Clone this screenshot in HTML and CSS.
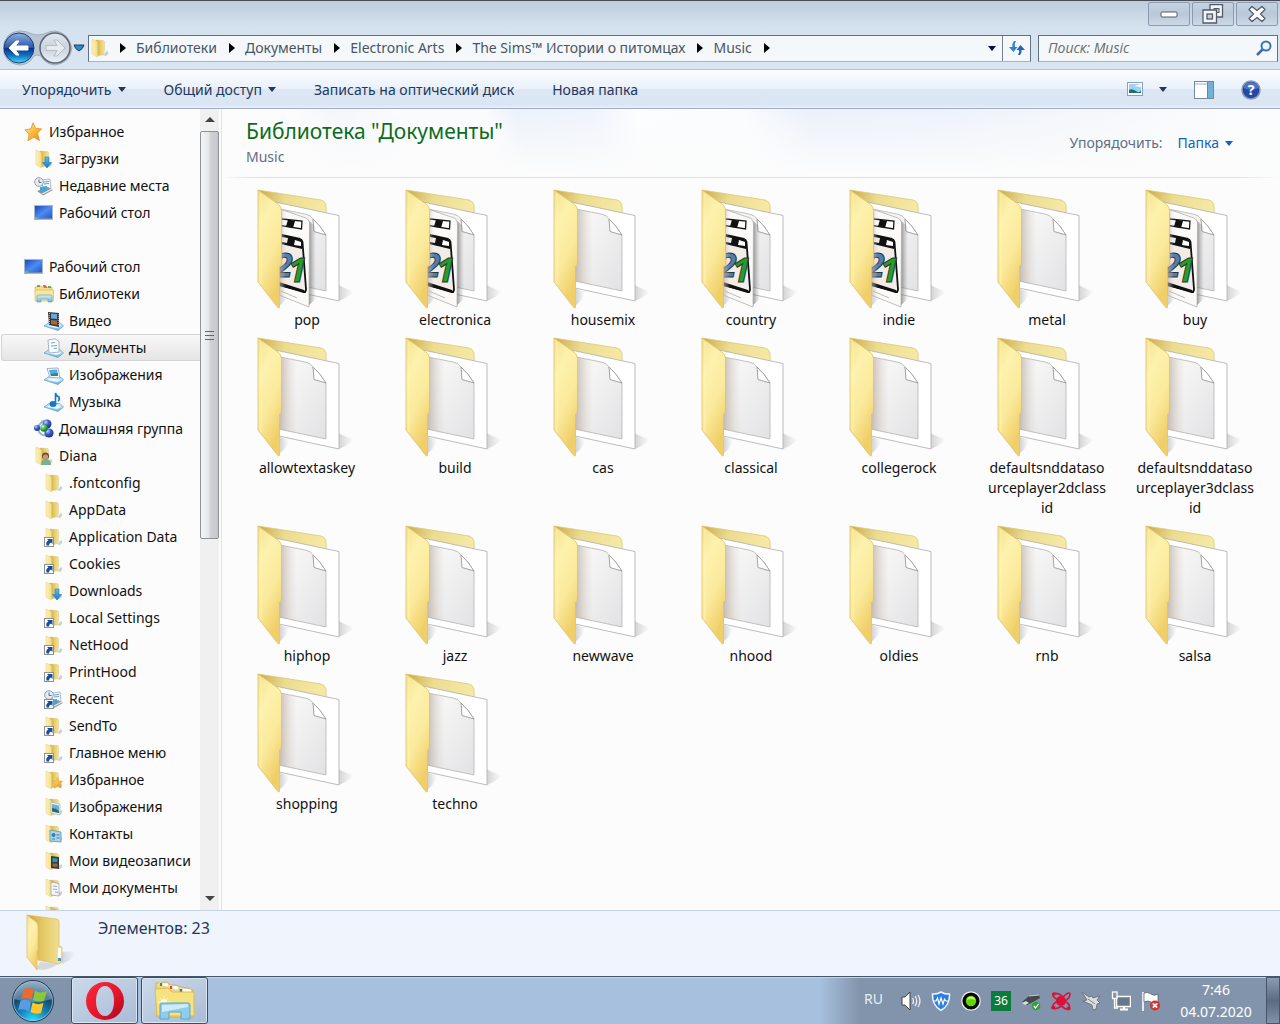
FILE: index.html
```html
<!DOCTYPE html>
<html lang="ru">
<head>
<meta charset="utf-8">
<meta name="viewport" content="width=device-width, initial-scale=1">
<title>Music</title>
<link rel="stylesheet" href="styles.css">
</head>
<body>
<svg class="defs" width="0" height="0" aria-hidden="true">
  <defs>
    <linearGradient id="flap" x1="0" y1="0" x2="0.4" y2="1"><stop offset="0" stop-color="#f3e08c"/><stop offset=".3" stop-color="#fdf2ad"/><stop offset=".65" stop-color="#fbea9c"/><stop offset="1" stop-color="#f0cf69"/></linearGradient>
    <linearGradient id="back" x1="0" y1="0" x2="1" y2="0.3"><stop offset="0" stop-color="#c9a94c"/><stop offset=".4" stop-color="#ecdc90"/><stop offset="1" stop-color="#f7eaa6"/></linearGradient>
    <linearGradient id="inner" x1="0" y1="0" x2="1" y2="1"><stop offset="0" stop-color="#fdfdfd"/><stop offset="1" stop-color="#e2e2e4"/></linearGradient>
    <linearGradient id="shade" x1="0" y1="0" x2="1" y2="0"><stop offset="0" stop-color="#b5a698" stop-opacity=".75"/><stop offset="1" stop-color="#d8ccc0" stop-opacity="0"/></linearGradient>
    <linearGradient id="cast" x1="0" y1="0" x2="1" y2="0"><stop offset="0" stop-color="#888" stop-opacity=".35"/><stop offset="1" stop-color="#999" stop-opacity="0"/></linearGradient>
    <linearGradient id="grey" x1="0" y1="0" x2="1" y2="0"><stop offset="0" stop-color="#333" stop-opacity=".5"/><stop offset="1" stop-color="#777" stop-opacity="0"/></linearGradient>
    <linearGradient id="screen" x1="0" y1="0" x2="1" y2="1"><stop offset="0" stop-color="#1546b8"/><stop offset=".5" stop-color="#4d8cf0"/><stop offset="1" stop-color="#1c52c4"/></linearGradient>
    <linearGradient id="starfill" x1="0" y1="0" x2="1" y2="1"><stop offset="0" stop-color="#fff0a0"/><stop offset=".5" stop-color="#fdbb3c"/><stop offset="1" stop-color="#e8801a"/></linearGradient>
    <linearGradient id="tray" x1="0" y1="0" x2="0" y2="1"><stop offset="0" stop-color="#d6effb"/><stop offset="1" stop-color="#6db4dc"/></linearGradient>
    <linearGradient id="backbtn" x1="0" y1="0" x2="0" y2="1"><stop offset="0" stop-color="#8fb0de"/><stop offset=".48" stop-color="#2b58ac"/><stop offset=".5" stop-color="#0b2e86"/><stop offset=".75" stop-color="#1272c4"/><stop offset="1" stop-color="#3ae0fb"/></linearGradient>
    <linearGradient id="fwdbtn" x1="0" y1="0" x2="0" y2="1"><stop offset="0" stop-color="#e2e8ef"/><stop offset=".5" stop-color="#cbd3dd"/><stop offset="1" stop-color="#eaf0f6"/></linearGradient>
    <linearGradient id="blue" x1="0" y1="0" x2="0" y2="1"><stop offset="0" stop-color="#56bff0"/><stop offset="1" stop-color="#1878c4"/></linearGradient>
    <linearGradient id="smallflap" x1="0" y1="0" x2="1" y2="0"><stop offset="0" stop-color="#fcf3ba"/><stop offset="1" stop-color="#f3dd86"/></linearGradient>
    <linearGradient id="smallback" x1="0" y1="0" x2="1" y2="0"><stop offset="0" stop-color="#c9a640"/><stop offset=".5" stop-color="#e6cb68"/><stop offset="1" stop-color="#f3e29a"/></linearGradient>
    <radialGradient id="orb" cx=".5" cy="1" r="1"><stop offset="0" stop-color="#2fe3ff"/><stop offset=".35" stop-color="#1687bd"/><stop offset=".65" stop-color="#14486f"/><stop offset="1" stop-color="#7597b4"/></radialGradient>
    <linearGradient id="opera" x1="0" y1="0" x2="1" y2="1"><stop offset="0" stop-color="#ff2a3a"/><stop offset=".6" stop-color="#e0142a"/><stop offset="1" stop-color="#a8061a"/></linearGradient>
    <radialGradient id="ball" cx=".35" cy=".3" r=".8"><stop offset="0" stop-color="#c8d8ff"/><stop offset=".4" stop-color="#4062c8"/><stop offset="1" stop-color="#142a80"/></radialGradient>
    <radialGradient id="gball" cx=".35" cy=".3" r=".8"><stop offset="0" stop-color="#d0f8c8"/><stop offset=".5" stop-color="#38a848"/><stop offset="1" stop-color="#106028"/></radialGradient>

    <symbol id="folder-base" viewBox="0 0 100 120">
      <path d="M82 112L82 96Q88 100 97 102Q92 108 82 112Z" fill="url(#cast)"/>
      <path d="M23 100L32 103Q29 112 23 116Z" fill="url(#cast)"/>
      <path d="M1 1L64 11Q68 12 69 16L70 60L24 60Z" fill="url(#back)" stroke="#dcc878" stroke-width=".8"/>
      <path d="M18 13L82 26.500V112L22 99Z" fill="#fff" stroke="#b4b4b4" stroke-width=".9"/>
      <path d="M18 19L48 25Q54 26 56 30Q63 36 69 46V102L22 92Z" fill="url(#inner)" stroke="#b4b4b4" stroke-width=".8"/>
      <path d="M56 30L57 42.500L69 46Q63 36 56 30Z" fill="#fff" stroke="#9a9a9a" stroke-width=".9"/>
      <path d="M23 20L40 24V97L22 92Z" fill="url(#shade)"/>
    </symbol>
    <symbol id="folder-flap" viewBox="0 0 100 120">
      <path d="M1 1L21 15Q24 17 24.500 21V74Q24.500 77 22.500 77V118.500Q22 120 20 117.500L1 93Z" fill="url(#flap)" stroke="#e0c268" stroke-width=".8"/>
      <path d="M4 5V95" stroke="#fff6c4" stroke-width="1" opacity=".7"/>
    </symbol>
    <symbol id="folder-page" viewBox="0 0 100 120">
      <use href="#folder-base"/><use href="#folder-flap"/>
    </symbol>
    <symbol id="folder-media" viewBox="0 0 100 120">
      <use href="#folder-base"/>
      <path d="M52 32L59 38V110L52 116Z" fill="url(#grey)"/>
      <path d="M20 19L49 29Q52 30 52.500 34L52 118L22 106Z" fill="#fbfaf9" stroke="#b0b0b0" stroke-width=".8"/>
      <path d="M20 29.500L45 32L44.500 40L20 36Z" fill="#fff" stroke="#161616" stroke-width="1.300"/>
      <path d="M31 30.500L38 32L36 39L29 37.500Z" fill="#111"/>
      <path d="M20 45L43 50Q45 50.500 45.500 53L49 100Q49 104 46 103L20 95" fill="#f1ece6" stroke="#111" stroke-width="1.800"/>
      <path d="M20 45L45 50.500V60L20 54Z" fill="#111"/>
      <path d="M25 48L31 49L30 54L25 53Z" fill="#eee"/>
      <path d="M38 51L44 53V57L37 56Z" fill="#fff"/>
      <path d="M22 93L47 101L49 104L22 97Z" fill="#111"/>
      <path d="M24 102L40 109" stroke="#aaa" stroke-width=".8"/>
      <text x="17" y="88" class="digit digit-two">2</text>
      <text x="31" y="93" class="digit digit-one">1</text>
      <path d="M23 20L29 22V108L22 106Z" fill="url(#shade)"/>
      <use href="#folder-flap"/>
    </symbol>

    <symbol id="i-folder" viewBox="0 0 20 20">
      <path d="M13 17L17 13Q20 15 16 18Z" fill="#999" opacity=".45"/>
      <path d="M6 2L13.500 2.500Q14.500 3 14.500 4V16.500L7 18Z" fill="url(#smallback)" stroke="#d8bf6c" stroke-width=".4"/>
      <path d="M14 13H15V16.500H14Z" fill="#d5eef0"/>
      <path d="M2 1L6.500 3Q7.500 3.500 7.500 5V19L2 16Z" fill="url(#smallflap)" stroke="#e2cc80" stroke-width=".5"/>
    </symbol>
    <symbol id="i-download" viewBox="0 0 20 20"><use href="#i-folder"/><path d="M11 8h4v5.500h2.500L13 19 8.500 13.500h2.500Z" fill="url(#blue)" stroke="#1c7cc0" stroke-width=".6"/></symbol>
    <symbol id="arrow-link" viewBox="0 0 20 20"><rect x=".5" y="10.500" width="9" height="9" fill="#fff" stroke="#8a8f98"/><path d="M2.500 18.500Q1.500 14.500 4.500 13.500L3 12H8.500V17L7 15.500Q5 16 5 18.500Z" fill="#1c4c98"/></symbol>
    <symbol id="i-link" viewBox="0 0 20 20"><use href="#i-folder"/><use href="#arrow-link"/></symbol>
    <symbol id="i-star" viewBox="0 0 20 20"><path d="M9 .8L11.800 6.500 17.600 6.800 13.500 11.300 15.500 18.500 9.800 15.200 4 18.800 5 12 .8 7.800 6.800 6.800Z" fill="url(#starfill)" stroke="#e0952c" stroke-width=".8"/></symbol>
    <symbol id="i-recent" viewBox="0 0 20 20">
      <path d="M8 4L16 3 17 13 9 15Z" fill="#f3f7fa" stroke="#8da0ac" stroke-width=".7"/><path d="M10 6l5-.6M10 8l5-.6" stroke="#67a6c8"/>
      <path d="M3 15L14 11 19 14 9 19.500Z" fill="#8c979e"/><path d="M6 11L13 10V15L6 16Z" fill="#4aa4cc"/><path d="M8 18L18 13" stroke="#e4eaed" stroke-width="1.200"/>
      <circle cx="5" cy="6" r="4.300" fill="#e4edf2" stroke="#8fa4b2"/><path d="M5 3.500V6.500H7.500" stroke="#456" fill="none" stroke-width=".8"/>
    </symbol>
    <symbol id="i-recent-link" viewBox="0 0 20 20"><use href="#i-recent"/><use href="#arrow-link"/></symbol>
    <symbol id="i-desktop" viewBox="0 0 20 20"><rect x=".5" y="2.500" width="18" height="14" fill="url(#screen)" stroke="#a9b8cc"/><path d="M1 15.500H18" stroke="#6c87b0"/><circle cx="2.500" cy="15.500" r="1.400" fill="#59c0b0"/></symbol>
    <symbol id="i-libs" viewBox="0 0 20 20">
      <path d="M1 3L7 2 9 3.500H18V14H2Z" fill="#f5e08a" stroke="#d0b252" stroke-width=".7"/><path d="M3 2h3M9 2h3M14 3h3" stroke="#4a9a4a" stroke-width="1.500"/><path d="M10 3h3" stroke="#d85030" stroke-width="1.300"/>
      <path d="M1 6H19.500V17H1Z" fill="#f8e89c" stroke="#d8bc60" stroke-width=".7"/>
      <path d="M3 18V12Q3 11 5 11H16Q18 11 18 12V18L14 18V15H7V18Z" fill="url(#tray)" stroke="#5fa4c8" stroke-width=".7"/>
    </symbol>
    <symbol id="tray-base" viewBox="0 0 20 20"><path d="M0 15L5 11.500H16L19.500 15 14 19.500Z" fill="url(#tray)" stroke="#5b9cc4" stroke-width=".7"/><path d="M3 15L6 13H15L17 15 13 17Z" fill="#e7f7fd"/></symbol>
    <symbol id="i-video" viewBox="0 0 20 20"><use href="#tray-base"/><path d="M4 1L15 2V16L5 14Z" fill="#30363e"/><path d="M7 2.500L13 3V8L7 7.500Z" fill="#6aa6d8"/><path d="M7 9L13 9.500V14L7 13Z" fill="#a5683e"/><path d="M5.500 2V14M14.200 3V15" stroke="#ccd" stroke-width=".8" stroke-dasharray="1 1"/></symbol>
    <symbol id="i-docs" viewBox="0 0 20 20"><use href="#tray-base"/><path d="M4 2L11 .8 15 3.500V14L5 15Z" fill="#fbfdff" stroke="#8fa6bc" stroke-width=".8"/><path d="M7 5l4-.5M7 8l6-.5M10 10.500l3-.3" stroke="#7aa0d0" stroke-width="1.200"/></symbol>
    <symbol id="i-pics" viewBox="0 0 20 20"><use href="#tray-base"/><path d="M3 3.500L14 3 16 13 6 12.500Z" fill="#f5fbff" stroke="#7fa4c0" stroke-width=".8"/><path d="M5 5L13 4.500 14 11 7 11Z" fill="#58a8d8"/><path d="M6.500 9L13.500 8 14 11H7Z" fill="#3c7c8c"/></symbol>
    <symbol id="i-music" viewBox="0 0 20 20"><use href="#tray-base"/><ellipse cx="9" cy="12" rx="3.500" ry="3" fill="#1876c4"/><path d="M11.500 12V1Q12 4 15 5Q16 8 14 9" fill="none" stroke="#1b78c6" stroke-width="1.600"/></symbol>
    <symbol id="i-home" viewBox="0 0 20 20"><path d="M4 8Q10 -3 16 6M4 10Q6 18 14 16" fill="none" stroke="#8fb0d8" stroke-width="2"/><circle cx="3" cy="9" r="3" fill="url(#ball)"/><circle cx="13" cy="5" r="4.500" fill="url(#ball)"/><circle cx="15" cy="14" r="4.600" fill="url(#ball)"/><circle cx="10" cy="9" r="3.800" fill="url(#gball)"/></symbol>
    <symbol id="i-user" viewBox="0 0 20 20"><use href="#i-folder"/><path d="M7 19Q7 13 12 13T17 19Z" fill="#7ab090"/><circle cx="11.500" cy="10" r="3.600" fill="#705038"/><circle cx="11.500" cy="11" r="2.600" fill="#c89a74"/></symbol>
    <symbol id="i-fav" viewBox="0 0 20 20"><use href="#i-folder"/><use href="#i-star" x="8" y="7" width="12" height="12"/></symbol>
    <symbol id="i-fpics" viewBox="0 0 20 20"><use href="#i-folder"/><path d="M7 5L16 7V18L7 16Z" fill="#e9f4fa" stroke="#a0b4c0" stroke-width=".7"/><path d="M8 7L15 8.500V16L8 14.500Z" fill="#6cb0e0"/><path d="M8 11Q12 11 15 14V16L8 14.500Z" fill="#2c6a60"/></symbol>
    <symbol id="i-contacts" viewBox="0 0 20 20"><use href="#i-folder"/><path d="M6 6L17 8V18L6 17Z" fill="#a8d6ee" stroke="#5c93b4" stroke-width=".8"/><circle cx="9.500" cy="11" r="2" fill="#3d7ea8"/><path d="M12.500 11h3M12.500 14h3M8 15h3" stroke="#3d7ea8"/></symbol>
    <symbol id="i-fvideo" viewBox="0 0 20 20"><use href="#i-folder"/><path d="M7 5L15 6V18L7 17Z" fill="#2f3c44"/><path d="M8.500 7L13.500 7.500V11L8.500 11Z" fill="#3c92ac"/><path d="M8.500 12.500H13.500V16L8.500 15.500Z" fill="#98683c"/></symbol>
    <symbol id="i-fdocs" viewBox="0 0 20 20"><use href="#i-folder"/><path d="M7 4L15 5.500V18L7 17Z" fill="#f4f6fa" stroke="#9a9aa8" stroke-width=".7"/><path d="M9 8l4 .5M9 11l4 .5M11 14l3 .5" stroke="#a0aac8"/></symbol>

    <symbol id="i-explorer" viewBox="0 0 42 40">
      <path d="M2 6L2 2 13 1 16 4 22 4 27 6 34 7 39 9V36H3Z" fill="#eed888" stroke="#c8a94c" stroke-width=".8"/><path d="M5 3l9 1M15 6l9 1M26 9l11 1" stroke="#fff" stroke-width="3"/><path d="M7 2v3" stroke="#3c9a3c" stroke-width="2.500"/><path d="M17 5v3" stroke="#d85030" stroke-width="2.500"/><path d="M27 8v3" stroke="#3870b8" stroke-width="2.500"/>
      <path d="M1 8L14 7 18 11H40V35H3Z" fill="#f6e27e" stroke="#dabd58"/>
      <path d="M10 15V27M4 21H17M6 17L14 25M14 17L6 25" stroke="#fff" stroke-width=".6"/><circle cx="10" cy="21" r="3" fill="#fffde0"/>
      <path d="M6 38V24Q6 22 8 22H34Q36 22 36 24V38H27V31H15V38Z" fill="#8fcdec" stroke="#5aa4cc"/><path d="M8 24L34 23V26L8 31Z" fill="#def3fc" opacity=".8"/>
    </symbol>
  </defs>
</svg>

<main class="window">
  <header class="titlebar">
    <button class="win-btn" aria-label="Свернуть"><svg width="20" height="20" viewBox="0 0 20 20"><rect x="2" y="8" width="16" height="5" rx="1" fill="#fff" stroke="#535b68"/></svg></button>
    <button class="win-btn" aria-label="Восстановить"><svg width="22" height="20" viewBox="0 0 22 20"><path d="M8 .5H20.500V13H8Z" fill="#f4f6f8" stroke="#535b68" stroke-width="1.300"/><rect x="12" y="4.500" width="5" height="4" fill="#c5d1de" stroke="#535b68"/><path d="M1 6H14.500V19H1Z" fill="#f4f6f8" stroke="#535b68" stroke-width="1.300"/><rect x="5" y="10" width="5.500" height="5" fill="#c5d1de" stroke="#535b68" stroke-width="1.300"/></svg></button>
    <button class="win-btn" aria-label="Закрыть"><svg width="20" height="18" viewBox="0 0 20 18"><path d="M2 4.500L5 1.500 10 5.500 15 1.500 18 4.500 13.500 9 18 13.500 15 16.500 10 12.500 5 16.500 2 13.500 6.500 9Z" fill="#fff" stroke="#535b68" stroke-width="1.300" stroke-linejoin="round"/></svg></button>
  </header>

  <nav class="navrow">
    <div class="history">
      <svg class="history-band" width="70" height="36" viewBox="0 0 70 36" aria-hidden="true"><path d="M16 1Q24 1 29 4Q35 6 41 4Q47 1 52 1Q65 2 69 18Q67 33 52 35Q42 34 38 26Q34 24 31 26Q26 35 16 35Q1 33 0 18Q2 2 16 1Z" fill="#b9c5d3" stroke="#a3afbd"/></svg>
      <button class="hist-btn" aria-label="Назад"><svg width="32" height="32" viewBox="0 0 32 32"><circle cx="16" cy="16" r="15" fill="url(#backbtn)" stroke="#223c70"/><path d="M6 16L13 9H16L12.500 14H25V18H12.500L16 23H13Z" fill="#fff" stroke="#fff" stroke-linejoin="round"/></svg></button>
      <button class="hist-btn" aria-label="Вперед"><svg width="32" height="32" viewBox="0 0 32 32"><circle cx="16" cy="16" r="15" fill="url(#fwdbtn)" stroke="#5e6772" stroke-width="1.500"/><path d="M26 16L18 8H15L18 13.500H7V18.500H18L15 24H18Z" fill="#e6ebf0" stroke="#b3bbc5" stroke-linejoin="round"/></svg></button>
      <button class="recent-btn" aria-label="Последние страницы"><svg width="12" height="8" viewBox="0 0 12 8"><path d="M1 1H11Q10 5 6 7Q2 5 1 1Z" fill="#3a86bc" stroke="#1c3c68"/></svg></button>
    </div>
    <div class="address">
      <svg class="icon" width="20" height="20"><use href="#i-folder"/></svg>
      <ol class="crumbs">
        <li><a href="#lib">Библиотеки</a></li>
        <li><a href="#docs">Документы</a></li>
        <li><a href="#ea">Electronic Arts</a></li>
        <li><a href="#sims">The Sims™ Истории о питомцах</a></li>
        <li><a href="#music">Music</a></li>
      </ol>
      <button class="addr-drop" aria-label="Предыдущие расположения"><span class="caret"></span></button>
      <button class="addr-refresh" aria-label="Обновить"><svg width="18" height="16" viewBox="0 0 18 16"><path d="M6 1Q4 3 4.500 7H1L5.500 12 9.500 7H7Q6 4 8 1Z" fill="#2e86c8"/><path d="M12 15Q14 13 13.500 10H17L12.500 5 8.500 10H11Q12 12 10 15Z" fill="#2265b4"/></svg></button>
    </div>
    <label class="search">
      <input type="search" placeholder="Поиск: Music" aria-label="Поиск">
      <svg width="18" height="16" viewBox="0 0 18 16" aria-hidden="true"><circle cx="11" cy="6" r="4.500" fill="#eef6fc" stroke="#3c74b8" stroke-width="2"/><path d="M7.500 9.500L2 15" stroke="#3a6cab" stroke-width="2.500"/></svg>
    </label>
  </nav>

  <div class="toolbar">
    <button class="tool">Упорядочить<span class="caret"></span></button>
    <button class="tool">Общий доступ<span class="caret"></span></button>
    <button class="tool">Записать на оптический диск</button>
    <button class="tool">Новая папка</button>
    <div class="tool-right">
      <button class="view-btn" aria-label="Изменить представление"><svg width="16" height="15" viewBox="0 0 16 15"><rect x=".5" y=".5" width="15" height="13" fill="#fff" stroke="#8aa0b8"/><rect x="2" y="2" width="12" height="9" fill="#9ed4ee"/><path d="M2 8Q5 6 9 9T14 8V11H2Z" fill="#1f6c80"/><path d="M7 4L14 2V5Z" fill="#fff"/></svg><span class="caret"></span></button>
      <button aria-label="Область просмотра"><svg width="20" height="18" viewBox="0 0 20 18"><rect x=".5" y=".5" width="19" height="17" fill="#fff" stroke="#7689a0"/><path d="M1 3H13" stroke="#9fb2c6"/><rect x="14" y="1" width="5" height="16" fill="#6fb2d4"/><path d="M13.500 1V17" stroke="#5a8fb0"/></svg></button>
      <button aria-label="Справка"><svg width="20" height="20" viewBox="0 0 20 20"><circle cx="10" cy="10" r="9" fill="#2448a8" stroke="#8a97b0" stroke-width="1.500"/><path d="M2.500 8Q4 2 10 2T17.500 8Q10 11 2.500 8Z" fill="#5f85d8" opacity=".7"/><text x="10" y="15" text-anchor="middle" class="help-mark">?</text></svg></button>
    </div>
  </div>

  <div class="body">
    <aside class="sidebar">
      <ul class="tree">
        <li><a class="l1" href="#t"><svg><use href="#i-star"/></svg>Избранное</a></li>
        <li><a class="l2" href="#t"><svg><use href="#i-download"/></svg>Загрузки</a></li>
        <li><a class="l2" href="#t"><svg><use href="#i-recent"/></svg>Недавние места</a></li>
        <li><a class="l2" href="#t"><svg><use href="#i-desktop"/></svg>Рабочий стол</a></li>
        <li class="group"><a class="l1" href="#t"><svg><use href="#i-desktop"/></svg>Рабочий стол</a></li>
        <li><a class="l2" href="#t"><svg><use href="#i-libs"/></svg>Библиотеки</a></li>
        <li><a class="l3" href="#t"><svg><use href="#i-video"/></svg>Видео</a></li>
        <li><a class="l3 selected" href="#t" aria-current="true"><svg><use href="#i-docs"/></svg>Документы</a></li>
        <li><a class="l3" href="#t"><svg><use href="#i-pics"/></svg>Изображения</a></li>
        <li><a class="l3" href="#t"><svg><use href="#i-music"/></svg>Музыка</a></li>
        <li><a class="l2" href="#t"><svg><use href="#i-home"/></svg>Домашняя группа</a></li>
        <li><a class="l2" href="#t"><svg><use href="#i-user"/></svg>Diana</a></li>
        <li><a class="l3" href="#t"><svg><use href="#i-folder"/></svg>.fontconfig</a></li>
        <li><a class="l3" href="#t"><svg><use href="#i-folder"/></svg>AppData</a></li>
        <li><a class="l3" href="#t"><svg><use href="#i-link"/></svg>Application Data</a></li>
        <li><a class="l3" href="#t"><svg><use href="#i-link"/></svg>Cookies</a></li>
        <li><a class="l3" href="#t"><svg><use href="#i-download"/></svg>Downloads</a></li>
        <li><a class="l3" href="#t"><svg><use href="#i-link"/></svg>Local Settings</a></li>
        <li><a class="l3" href="#t"><svg><use href="#i-link"/></svg>NetHood</a></li>
        <li><a class="l3" href="#t"><svg><use href="#i-link"/></svg>PrintHood</a></li>
        <li><a class="l3" href="#t"><svg><use href="#i-recent-link"/></svg>Recent</a></li>
        <li><a class="l3" href="#t"><svg><use href="#i-link"/></svg>SendTo</a></li>
        <li><a class="l3" href="#t"><svg><use href="#i-link"/></svg>Главное меню</a></li>
        <li><a class="l3" href="#t"><svg><use href="#i-fav"/></svg>Избранное</a></li>
        <li><a class="l3" href="#t"><svg><use href="#i-fpics"/></svg>Изображения</a></li>
        <li><a class="l3" href="#t"><svg><use href="#i-contacts"/></svg>Контакты</a></li>
        <li><a class="l3" href="#t"><svg><use href="#i-fvideo"/></svg>Мои видеозаписи</a></li>
        <li><a class="l3" href="#t"><svg><use href="#i-fdocs"/></svg>Мои документы</a></li>
        <li><a class="l3" href="#t"><svg><use href="#i-fdocs"/></svg>Моя музыка</a></li>
      </ul>
      <div class="scrollbar" aria-hidden="true">
        <span class="scroll-arrow"><svg width="10" height="6" viewBox="0 0 10 6"><path d="M5 0L10 5H0Z" fill="#444"/></svg></span>
        <span class="thumb"><svg width="9" height="10" viewBox="0 0 9 10"><path d="M0 1.500H9M0 5.500H9M0 9.500H9" stroke="#666"/></svg></span>
        <span class="track"></span>
        <span class="scroll-arrow"><svg width="10" height="6" viewBox="0 0 10 6"><path d="M0 0H10L5 5Z" fill="#444"/></svg></span>
      </div>
    </aside>

    <section class="content">
      <div class="lib-head">
        <div>
          <h1>Библиотека "Документы"</h1>
          <p>Music</p>
        </div>
        <div class="arrange"><span>Упорядочить:</span><button>Папка<span class="caret"></span></button></div>
      </div>
      <ul class="files">
        <li><a href="#f"><svg><use href="#folder-media"/></svg><span>pop</span></a></li>
        <li><a href="#f"><svg><use href="#folder-media"/></svg><span>electronica</span></a></li>
        <li><a href="#f"><svg><use href="#folder-page"/></svg><span>housemix</span></a></li>
        <li><a href="#f"><svg><use href="#folder-media"/></svg><span>country</span></a></li>
        <li><a href="#f"><svg><use href="#folder-media"/></svg><span>indie</span></a></li>
        <li><a href="#f"><svg><use href="#folder-page"/></svg><span>metal</span></a></li>
        <li><a href="#f"><svg><use href="#folder-media"/></svg><span>buy</span></a></li>
        <li><a href="#f"><svg><use href="#folder-page"/></svg><span>allowtextaskey</span></a></li>
        <li><a href="#f"><svg><use href="#folder-page"/></svg><span>build</span></a></li>
        <li><a href="#f"><svg><use href="#folder-page"/></svg><span>cas</span></a></li>
        <li><a href="#f"><svg><use href="#folder-page"/></svg><span>classical</span></a></li>
        <li><a href="#f"><svg><use href="#folder-page"/></svg><span>collegerock</span></a></li>
        <li><a href="#f"><svg><use href="#folder-page"/></svg><span>defaultsnddatasourceplayer2dclassid</span></a></li>
        <li><a href="#f"><svg><use href="#folder-page"/></svg><span>defaultsnddatasourceplayer3dclassid</span></a></li>
        <li><a href="#f"><svg><use href="#folder-page"/></svg><span>hiphop</span></a></li>
        <li><a href="#f"><svg><use href="#folder-page"/></svg><span>jazz</span></a></li>
        <li><a href="#f"><svg><use href="#folder-page"/></svg><span>newwave</span></a></li>
        <li><a href="#f"><svg><use href="#folder-page"/></svg><span>nhood</span></a></li>
        <li><a href="#f"><svg><use href="#folder-page"/></svg><span>oldies</span></a></li>
        <li><a href="#f"><svg><use href="#folder-page"/></svg><span>rnb</span></a></li>
        <li><a href="#f"><svg><use href="#folder-page"/></svg><span>salsa</span></a></li>
        <li><a href="#f"><svg><use href="#folder-page"/></svg><span>shopping</span></a></li>
        <li><a href="#f"><svg><use href="#folder-page"/></svg><span>techno</span></a></li>
      </ul>
    </section>
  </div>

  <footer class="details">
    <svg width="52" height="58" viewBox="0 0 52 58" aria-hidden="true">
      <path d="M33 50L36 38Q44 37 50 38Q46 48 33 50Z" fill="url(#cast)"/><path d="M10 55L14 48L32 50Q20 58 10 55Z" fill="#999" opacity=".3"/>
      <path d="M1 1L30 5Q33 5 33 8V32L36 33V47L33 50L12 46Z" fill="url(#smallback)" stroke="#d8c06a" stroke-width=".8"/><path d="M32 34H35V47H32Z" fill="#fff"/><path d="M32 44H35V47H32Z" fill="#4a90c0"/>
      <path d="M1 1L10 8Q12 10 12 12V36L11 37V56L1 43Z" fill="url(#flap)" stroke="#dcc268" stroke-width=".8"/>
    </svg>
    <p>Элементов: 23</p>
  </footer>
</main>

<div class="taskbar">
  <button class="start" aria-label="Пуск"><svg width="44" height="44" viewBox="0 0 44 44"><circle cx="22" cy="22" r="20.500" fill="url(#orb)" stroke="#1e3c58"/><circle cx="22" cy="22" r="19.500" fill="none" stroke="#a9cfe2" opacity=".7"/><path d="M3 20Q6 3 22 3T41 20Q22 26 3 20Z" fill="#fff" opacity=".28"/>
    <path d="M13 11Q18 7 22.500 11L20.500 21Q15.500 17.500 10 20Z" fill="#ee6a2c"/><path d="M24 11.500Q29 15 36 12L33 22Q27 24 22 21Z" fill="#8cc63c"/><path d="M9.500 22Q15 19 20 23L18 32.500Q12.500 29 7 31Z" fill="#5a9ce0"/><path d="M21.500 23.500Q27 26.500 32.500 24L30 34Q25 36 19.500 33Z" fill="#fcc62c"/></svg></button>
  <button class="task" aria-label="Opera"><svg width="40" height="40" viewBox="0 0 40 40"><path fill-rule="evenodd" d="M20 1A19 19 0 1 1 20 39A19 19 0 1 1 20 1ZM20 5C14 5 11 12 11 20S14 35 20 35 29 28 29 20 26 5 20 5Z" fill="url(#opera)"/></svg></button>
  <button class="task" aria-label="Проводник"><svg width="42" height="40"><use href="#i-explorer"/></svg></button>
  <div class="notify">
    <span class="lang">RU</span>
    <div class="icons">
      <svg viewBox="0 0 20 20"><path d="M1 6H4L9 1V19L4 14H1Z" fill="#fff" stroke="#444"/><path d="M11.500 7Q13.500 10 11.500 13M14 5Q17.500 10 14 15M17 4Q21 10 17 16" fill="none" stroke="#eee" stroke-width="1.300"/></svg>
      <svg viewBox="0 0 20 20"><path d="M10 1Q14 3.500 18.500 3Q19 14 10 19.500Q1 14 1.500 3Q6 3.500 10 1Z" fill="#2f7de0" stroke="#e9f3ff" stroke-width="1.500"/><path d="M3 10H5L6.500 7 8 13 10 7 12 13 13.500 8 15 10H17" fill="none" stroke="#fff" stroke-width="1.200"/></svg>
      <svg viewBox="0 0 20 20"><circle cx="10" cy="10" r="9.200" fill="#090909" stroke="#f2f2f2" stroke-width="1.200"/><circle cx="10" cy="10" r="5.200" fill="#62d800"/><path d="M6 9Q6 5.500 10 5.500T14 9Q10 7 6 9Z" fill="#b4f570"/></svg>
      <span class="badge">36</span>
      <svg viewBox="0 0 20 20"><path d="M1 11L8 5 18 4 19 7 12 11 6 14Z" fill="#44484c"/><path d="M1 12L5 10 8 12 4 14Z" fill="#d8dcde"/><path d="M8 5L18 4" stroke="#c4c8ca"/><circle cx="15" cy="15" r="4.300" fill="#32a03c"/><path d="M12.800 15L14.500 17 17.500 13" fill="none" stroke="#fff" stroke-width="1.200"/></svg>
      <svg viewBox="0 0 20 20"><circle cx="10" cy="10" r="5" fill="#d8123a"/><path d="M10 10Q1 7 2 3Q7 1 12 6Q18 0 19 3Q19 7 14 10Q20 14 18 18Q14 19 11 15Q4 19 1 17Q2 12 7 10" fill="none" stroke="#d8123a" stroke-width="1.600"/><circle cx="3" cy="3" r="1.800" fill="#d8123a"/><circle cx="17.500" cy="17.500" r="2" fill="#d8123a"/><circle cx="2.500" cy="16.500" r="1.800" fill="#d8123a"/></svg>
      <svg viewBox="0 0 20 20"><path d="M1 1L8 6 11 5 12 7 19 5 16 9 19 12 16 13 15 18 12 19 11 14 2 10 6 9Z" fill="#dcdddd" stroke="#606870" stroke-width=".8"/><path d="M7 8L14 13" stroke="#77808a"/></svg>
      <svg viewBox="0 0 20 20"><rect x="5.500" y="5.500" width="14" height="10" fill="#66788c" stroke="#fff" stroke-width="1.500"/><path d="M9 18.500H17M13 16V18" stroke="#fff" stroke-width="2"/><rect x="1.500" y="1" width="4.500" height="6.500" fill="#8394aa" stroke="#fff" stroke-width="1.300"/><path d="M3.500 8V17H7" fill="none" stroke="#fff" stroke-width="1.300"/></svg>
      <svg viewBox="0 0 20 20"><path d="M2 1V20" stroke="#fff" stroke-width="1.600"/><path d="M3 2Q7 .5 10 3T17 3V12Q13 13 10 11T3 11Z" fill="#fff" stroke="#556" stroke-width=".7"/><circle cx="14" cy="14.500" r="5" fill="#d8302a"/><path d="M11.800 12.300L16.200 16.700M16.200 12.300L11.800 16.700" stroke="#fff" stroke-width="1.700"/></svg>
    </div>
    <div class="clock"><span>7:46</span><span>04.07.2020</span></div>
    <button class="show-desktop" aria-label="Свернуть все окна"></button>
  </div>
</div>
</body>
</html>
```
FILE: styles.css
```css
* { box-sizing: border-box; }
body {
  margin: 0;
  height: 100vh;
  display: flex;
  flex-direction: column;
  overflow: hidden;
  font-family: "Noto Sans", "Open Sans", sans-serif;
  font-size: 14px;
  line-height: 20px;
  color: #111;
  background: #fcfcfc;
}
ul, ol { list-style: none; margin: 0; padding: 0; }
a { color: inherit; text-decoration: none; }
button { font: inherit; color: inherit; background: none; border: 0; padding: 0; display: flex; align-items: center; justify-content: center; }
h1, p { margin: 0; }
svg { flex: none; display: block; }
.defs { position: absolute; }
.digit { font: italic 700 34px "Open Sans", "Noto Sans", sans-serif; stroke: #333; stroke-width: 1px; }
.digit-two { fill: #4f7faf; }
.digit-one { fill: #1fa02c; }
.help-mark { font: 700 14px "Noto Sans", sans-serif; fill: #fff; }
.caret { width: 0; height: 0; border: 4px solid transparent; border-top: 5px solid currentColor; border-bottom: 0; }

.window { flex: 1; min-height: 0; display: flex; flex-direction: column; }
.titlebar {
  height: 27px;
  flex: none;
  display: flex;
  justify-content: flex-end;
  align-items: flex-start;
  gap: 2px;
  padding: 1px 2px 0;
  border-top: 1px solid #484c56;
  background: linear-gradient(#bfccdb, #d4e1ee);
}
.win-btn { width: 42px; height: 24px; border: 1px solid #8d9bb0; border-radius: 2px; background: linear-gradient(#c5d2e0, #bac8d8 50%, #cbd8e6); }

.navrow { height: 42px; flex: none; display: flex; align-items: center; padding: 0 2px 0 3px; background: linear-gradient(#d4e1ee, #d9e6f2); }
.history { position: relative; display: flex; align-items: center; gap: 4px; width: 85px; }
.history-band { position: absolute; left: 0; }
.hist-btn, .recent-btn { position: relative; }
.recent-btn { margin-left: -2px; }
.address { flex: 1; display: flex; align-items: center; height: 27px; border: 1px solid #63707f; border-bottom-color: #a8b6c4; background: #f4f8fb; }
.address .icon { margin-left: 1px; }
.crumbs { flex: 1; display: flex; color: #4a5562; }
.crumbs li { display: flex; align-items: center; }
.crumbs a { padding: 0 2px 0 10px; }
.crumbs li::before, .crumbs li:last-child::after { content: ""; border: 5px solid transparent; border-left: 6px solid #000; border-right: 0; margin-left: 10px; }
.addr-drop { width: 20px; height: 100%; color: #0a0a50; }
.addr-refresh { width: 28px; height: 100%; border-left: 1px solid #76828f; }
.search { width: 240px; height: 27px; margin-left: 7px; display: flex; align-items: center; gap: 4px; padding: 0 4px 0 9px; border: 1px solid #63707f; border-bottom-color: #a8b6c4; background: #f4f8fb; }
.search input { flex: 1; min-width: 0; border: 0; background: none; padding: 0; font: italic 14px/20px "Open Sans", "Noto Sans", sans-serif; outline: 0; }
.search input::placeholder { color: #6c6c6c; opacity: 1; }

.toolbar {
  height: 40px;
  flex: none;
  display: flex;
  align-items: center;
  gap: 38px;
  padding: 1px 19px 0 22px;
  color: #1e395b;
  border-top: 1px solid #b2c3d6;
  border-bottom: 1px solid #a0afc3;
  background: linear-gradient(#fbfdff, #eaf1fb 49%, #dce6f4 50%, #dbe6f5 92%, #e9f0fa);
}
.tool, .arrange button { gap: 6px; }
.tool-right { margin-left: auto; display: flex; align-items: center; gap: 27px; }
.view-btn { gap: 16px; }

.body { flex: 1; min-height: 0; display: flex; }
.sidebar { width: 222px; flex: none; display: flex; overflow: hidden; border-right: 1px solid #d6e5f5; }
.tree { flex: 1; min-width: 0; padding-top: 9px; overflow: hidden; }
.tree a { height: 27px; display: flex; align-items: center; gap: 5px; white-space: nowrap; border: 1px solid transparent; margin-left: 1px; }
.tree svg { width: 20px; height: 20px; }
.tree .l1 { padding-left: 22px; }
.tree .l2 { padding-left: 32px; }
.tree .l3 { padding-left: 42px; }
.tree .group { margin-top: 27px; }
.tree .selected { border-color: #d4d4d4; border-right: 0; border-radius: 3px 0 0 3px; background: linear-gradient(#f8f8f8, #e5e5e5); }
.scrollbar { width: 19px; margin-right: 2px; display: flex; flex-direction: column; background: #f0f0f0; }
.scroll-arrow { height: 22px; flex: none; display: flex; align-items: center; justify-content: center; }
.thumb { flex: 408; display: flex; align-items: center; justify-content: center; border: 1px solid #8f9296; border-radius: 2px; background: linear-gradient(90deg, #f5f5f6, #e5e6e8 45%, #cfd1d5 55%, #c5c7cb); }
.track { flex: 351; }

.content { flex: 1; min-width: 0; overflow: hidden; background: #fcfcfc; }
.lib-head {
  height: 69px;
  display: flex;
  justify-content: space-between;
  padding: 7px 47px 0 24px;
  background:
    linear-gradient(90deg, #fcfcfc, #d3e3f0 3%, #d3e3f0 96%, #fcfcfc) bottom / 100% 1px no-repeat,
    linear-gradient(rgba(252,252,252,0), #fcfcfc 95%),
    linear-gradient(75deg, #fcfcfc 8%, #f3f6fb 12%, #fafbfd 18%, #fafbfd 26%, #ecf2fa 29%, #eff4fb 36%, #fcfdfe 40%, #fafcfe 50%, #ebf1fa 56%, #edf2fa 68%, #fbfcfd 95%);
}
.lib-head h1 { font-size: 21px; line-height: 30px; font-weight: 400; color: #0c6c1c; }
.lib-head p { padding-top: 1px; color: #5f6e86; }
.arrange { display: flex; align-items: center; gap: 15px; color: #5f6e86; height: 54px; }
.arrange button { color: #1364c0; }
.files { display: grid; grid-template-columns: repeat(auto-fill, 148px); padding: 4px 0 0 11px; }
.files a { display: flex; flex-direction: column; align-items: center; gap: 1px; padding-top: 7px; }
.files svg { width: 100px; height: 120px; }
.files span { max-width: 120px; text-align: center; word-break: break-all; }

.details { height: 66px; flex: none; display: flex; gap: 20px; padding: 3px 26px; border-top: 1px solid #c5d5e6; background: #f0f4fc; color: #1e395b; font-size: 16px; }
.details p { padding-top: 4px; }

.taskbar { height: 48px; flex: none; display: flex; align-items: center; gap: 3px; border-top: 1px solid #44566a; background: linear-gradient(90deg, #8294ab 0, #8294ab 71px, #a7c0dd 72px, #a7c0dd 820px, #8294ab 860px); box-shadow: inset 0 1px #c4d4e4; }
.start { width: 68px; padding-right: 2px; }
.task { width: 67px; height: 47px; border: 1px solid #3e4c60; border-radius: 3px; background: linear-gradient(150deg, #ccd9ea, #a9bcd6); box-shadow: inset 0 0 0 1px #dbe6f2; }
.notify { margin-left: auto; display: flex; align-items: center; height: 100%; color: #fff; }
.lang { padding-bottom: 4px; margin-right: 18px; color: #e8eef5; }
.icons { display: flex; align-items: center; gap: 10px; }
.icons svg { width: 20px; height: 20px; }
.badge { width: 20px; height: 20px; background: #0a7c3c; font-size: 12px; text-align: center; }
.clock { display: flex; flex-direction: column; align-items: center; width: 100px; padding-top: 1px; margin-left: 5px; line-height: 22px; }
.show-desktop { width: 14px; height: 100%; border: 1px solid #46576c; background: linear-gradient(#8b9bb0, #5b6b80 50%, #8092aa); }
```
